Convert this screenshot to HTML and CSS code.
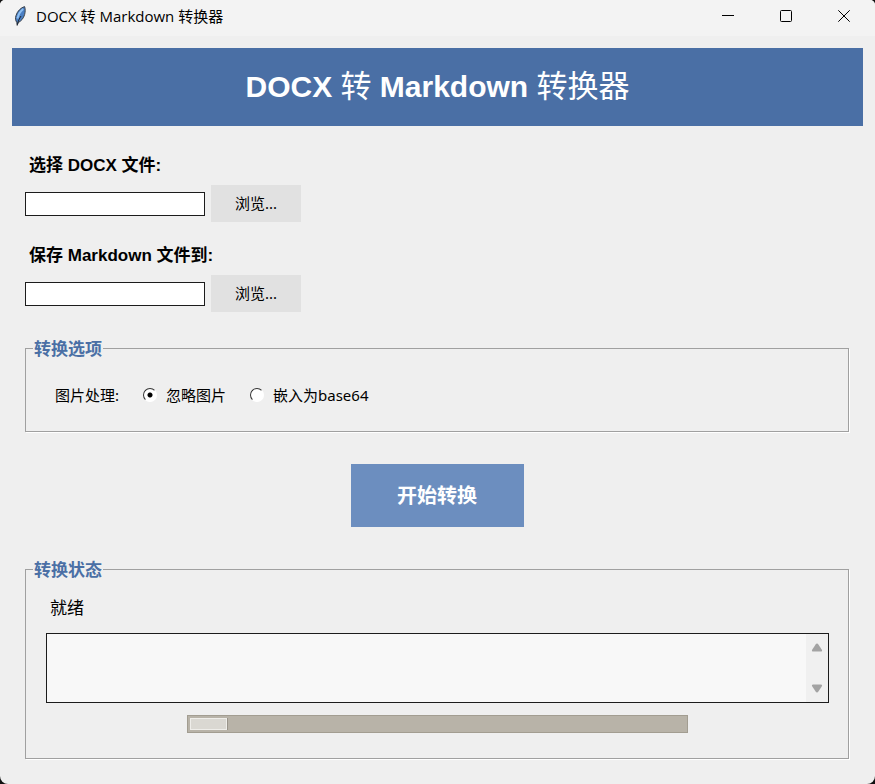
FILE: index.html
```html
<!DOCTYPE html>
<html lang="zh-CN">
<head>
    <meta charset="UTF-8">
    <meta name="viewport" content="width=device-width, initial-scale=1.0">
    <title>DOCX 转 Markdown 转换器</title>
    <link rel="stylesheet" href="styles.css">
</head>
<body>
<div class="window">
    <div class="titlebar">
        <svg class="app-icon" width="12" height="20" viewBox="0 0 12 20">
            <path d="M10.6 0.6C7 1.6 3.4 5 2 9.5C1.2 12 1.4 14.5 2.8 16.5L3.2 19.4L4.2 16.6C7 15.2 9.6 12.4 10.6 8.6C11.4 5.6 11.4 3 10.6 0.6Z" fill="#4a7fc4" stroke="#3c4148" stroke-width="1"/>
            <path d="M9.2 3C6.6 5 4.4 8.6 3.4 12.6" fill="none" stroke="#8fc0f2" stroke-width="2"/>
            <path d="M7 10C5.6 12.4 4 15 3.4 18.6" fill="none" stroke="#1d2530" stroke-width="1"/>
        </svg>
        <span class="title">DOCX 转 Markdown 转换器</span>
        <div class="window-buttons">
            <button type="button" aria-label="最小化"><svg width="12" height="12" viewBox="0 0 12 12"><path d="M0 5.5H12"/></svg></button>
            <button type="button" aria-label="最大化"><svg width="12" height="12" viewBox="0 0 12 12"><rect x="0.5" y="0.5" width="11" height="11" rx="1"/></svg></button>
            <button type="button" aria-label="关闭"><svg width="12" height="12" viewBox="0 0 12 12"><path d="M0.3 0.3L11.7 11.7M11.7 0.3L0.3 11.7"/></svg></button>
        </div>
    </div>

    <main class="content">
        <h1>DOCX <span class="han">转</span> Markdown <span class="han">转换器</span></h1>

        <form class="form">
            <div class="field">
                <label for="source">选择 DOCX 文件:</label>
                <div class="field-row">
                    <input type="text" id="source">
                    <button type="button" class="browse">浏览...</button>
                </div>
            </div>
            <div class="field">
                <label for="target">保存 Markdown 文件到:</label>
                <div class="field-row">
                    <input type="text" id="target">
                    <button type="button" class="browse">浏览...</button>
                </div>
            </div>

            <fieldset class="options">
                <legend>转换选项</legend>
                <div class="option-row">
                    <span class="option-title">图片处理:</span>
                    <label><input type="radio" name="images" value="ignore" checked>忽略图片</label>
                    <label><input type="radio" name="images" value="base64">嵌入为base64</label>
                </div>
            </fieldset>

            <button type="button" class="convert">开始转换</button>

            <fieldset class="status">
                <legend>转换状态</legend>
                <label for="log">就绪</label>
                <div class="log-box">
                    <textarea id="log" readonly></textarea>
                    <div class="scrollbar">
                        <button type="button" aria-label="向上滚动"><svg width="12" height="9" viewBox="0 0 12 9"><path d="M6 0.5Q6.8 0.5 7.4 1.4L11 7Q11.6 8.5 10 8.5H2Q0.4 8.5 1 7L4.6 1.4Q5.2 0.5 6 0.5Z"/></svg></button>
                        <button type="button" aria-label="向下滚动"><svg width="12" height="9" viewBox="0 0 12 9"><path d="M6 8.5Q6.8 8.5 7.4 7.6L11 2Q11.6 0.5 10 0.5H2Q0.4 0.5 1 2L4.6 7.6Q5.2 8.5 6 8.5Z"/></svg></button>
                    </div>
                </div>
                <progress value="7.5" max="100" aria-label="转换进度"></progress>
            </fieldset>
        </form>
    </main>
</div>
</body>
</html>
```
FILE: styles.css
```css
* {
    box-sizing: border-box;
}
body {
    margin: 0;
    background-color: #111;
    color: black;
    font-family: "Noto Sans", "Noto Sans CJK SC", sans-serif;
    font-size: 15px;
    line-height: 20px;
}
button, input, textarea {
    font: inherit;
    color: inherit;
    margin: 0;
    border: 0;
    padding: 0;
}
.window {
    min-height: 100vh;
    background-color: #efefef;
    border-radius: 5px 5px 8px 8px;
    overflow: hidden;
}
.titlebar {
    display: flex;
    align-items: center;
    height: 36px;
    padding: 0 2px 4px 14px;
    background-color: #f3f3f3;
}
.title {
    margin-left: 10px;
    font-family: "Open Sans", "Noto Sans CJK SC", sans-serif;
}
.window-buttons {
    display: flex;
    margin-left: auto;
}
.window-buttons button {
    display: flex;
    align-items: center;
    justify-content: center;
    width: 58px;
    height: 32px;
    background: none;
}
.window-buttons svg {
    fill: none;
    stroke: black;
}

.content {
    padding: 12px;
}
h1 {
    margin: 0;
    padding: 19px 0;
    background-color: #4a6fa5;
    color: white;
    text-align: center;
    font-family: "Liberation Sans", "Noto Sans CJK SC", sans-serif;
    font-size: 30px;
    line-height: 40px;
}
h1 .han {
    font-weight: normal;
    font-size: 31px;
}
.form {
    display: flex;
    flex-direction: column;
    padding: 30px 14px 0 13px;
}
.field {
    margin-bottom: 24px;
}
.field > label {
    display: block;
    padding-left: 4px;
    font-family: "Liberation Sans", "Noto Sans CJK SC", sans-serif;
    font-size: 17px;
    font-weight: bold;
}
.field-row {
    display: flex;
    align-items: center;
    gap: 6px;
    margin-top: 9px;
}
.field-row input {
    width: 180px;
    height: 24px;
    padding: 0 4px;
    border: 1px solid #1c1c1c;
    background-color: white;
}
.browse {
    width: 90px;
    height: 37px;
    padding-bottom: 2px;
    background-color: #e1e1e1;
}

fieldset {
    min-width: 0;
    margin: 0;
    border: 1px solid #a0a0a0;
    box-shadow: 1px 1px 0 white;
}
legend {
    padding: 4px 1px 0;
    color: #4a6fa5;
    font-family: "Liberation Sans", "Noto Sans CJK SC", sans-serif;
    font-size: 17px;
    font-weight: bold;
}
.options {
    padding: 25px 7px 26px;
}
.option-row {
    display: flex;
    align-items: center;
    padding-left: 22px;
}
.option-title {
    margin-right: 24px;
}
.option-row label {
    display: flex;
    align-items: center;
    margin-right: 24px;
}
.option-row input {
    appearance: none;
    width: 14px;
    height: 14px;
    margin-right: 9px;
    border: 1px solid;
    border-color: #333 white white #333;
    border-radius: 50%;
    background-color: white;
}
.option-row input:checked {
    background-image: radial-gradient(circle, black 2px, white 3px);
}

.convert {
    align-self: center;
    width: 173px;
    height: 63px;
    margin: 32px 0 30px;
    background-color: #6c8ebf;
    color: white;
    font-size: 20px;
    font-weight: bold;
}

.status {
    padding: 17px 19px 25px 20px;
}
.status legend {
    margin-left: -13px;
}
.status label {
    display: block;
    padding-left: 4px;
    font-size: 17px;
}
.log-box {
    display: flex;
    height: 70px;
    margin: 15px 0 12px;
    border: 1px solid #1c1c1c;
    background-color: #f8f8f8;
}
.log-box textarea {
    flex: 1;
    resize: none;
    background: none;
    padding: 4px;
}
.scrollbar {
    display: flex;
    flex-direction: column;
    justify-content: space-between;
    width: 22px;
    padding: 6px 0;
    background-color: #f0f0f0;
}
.scrollbar button {
    display: flex;
    justify-content: center;
    padding: 3px 0;
    background: none;
}
.scrollbar svg {
    fill: #a3a3a3;
}
progress {
    appearance: none;
    display: block;
    width: 64%;
    height: 18px;
    margin: 0 auto;
    border: 1px solid #a29d91;
    padding: 2px;
    background-color: #b8b3a8;
}
progress::-webkit-progress-bar {
    background-color: #b8b3a8;
}
progress::-webkit-progress-value {
    border: 1px solid #efeeea;
    background-color: #dad8d2;
    box-shadow: 1px 0 0 #99948a;
}
```
